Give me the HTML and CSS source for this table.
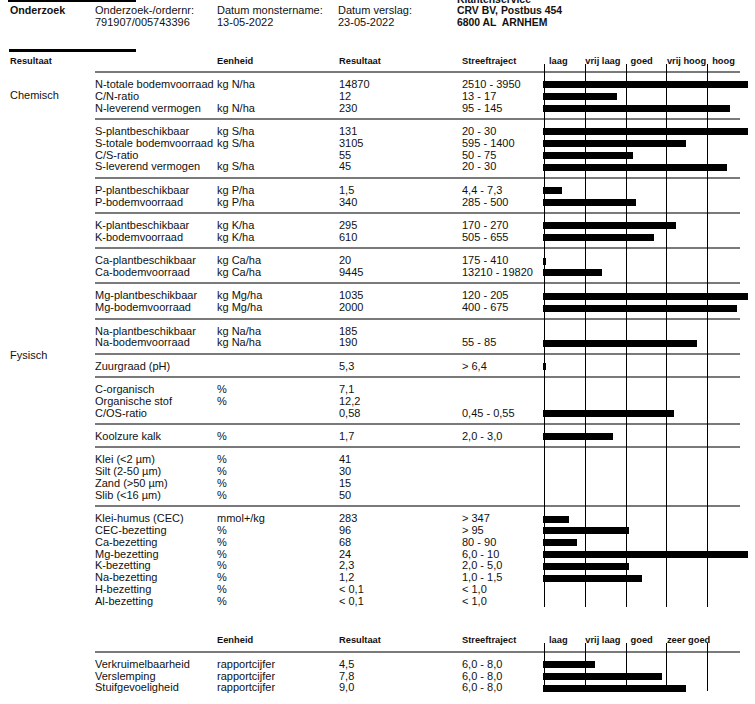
FILE: index.html
```html
<!DOCTYPE html>
<html lang="nl">
<head>
<meta charset="utf-8">
<title>Onderzoek resultaat</title>
<link rel="stylesheet" href="styles.css">
</head>
<body>
<div class="top-rule"></div>
<div class="meta">
  <div class="meta-title">Onderzoek</div>
  <div>Onderzoek-/ordernr:<br>791907/005743396</div>
  <div>Datum monstername:<br>13-05-2022</div>
  <div>Datum verslag:<br>23-05-2022</div>
  <div class="addr">Klantenservice<br>CRV BV, Postbus 454<br>6800 AL&nbsp; ARNHEM</div>
</div>
<div class="section-rule"></div>

<div class="report">
  <div class="labels">
    <div class="lbl-head">Resultaat</div>
    <div class="lbl chem">Chemisch</div>
    <div class="lbl fys">Fysisch</div>
  </div>
  <div class="table">
    <div class="thead">
      <span></span><span>Eenheid</span><span>Resultaat</span><span>Streeftraject</span>
      <div class="scale"><span>laag</span><span class="tight">vrij laag</span><span>goed</span><span class="tight">vrij hoog</span><span>hoog</span></div>
    </div>

    <div class="group">
      <span>N-totale bodemvoorraad</span><span>kg N/ha</span><span>14870</span><span>2510 - 3950</span><span class="bc"><i class="bar" style="width:205px"></i></span>
      <span>C/N-ratio</span><span></span><span>12</span><span>13 - 17</span><span class="bc"><i class="bar" style="width:74px"></i></span>
      <span>N-leverend vermogen</span><span>kg N/ha</span><span>230</span><span>95 - 145</span><span class="bc"><i class="bar" style="width:187px"></i></span>
    </div>

    <div class="group">
      <span>S-plantbeschikbaar</span><span>kg S/ha</span><span>131</span><span>20 - 30</span><span class="bc"><i class="bar" style="width:205px"></i></span>
      <span>S-totale bodemvoorraad</span><span>kg S/ha</span><span>3105</span><span>595 - 1400</span><span class="bc"><i class="bar" style="width:143px"></i></span>
      <span>C/S-ratio</span><span></span><span>55</span><span>50 - 75</span><span class="bc"><i class="bar" style="width:90px"></i></span>
      <span>S-leverend vermogen</span><span>kg S/ha</span><span>45</span><span>20 - 30</span><span class="bc"><i class="bar" style="width:184px"></i></span>
    </div>

    <div class="group">
      <span>P-plantbeschikbaar</span><span>kg P/ha</span><span>1,5</span><span>4,4 - 7,3</span><span class="bc"><i class="bar" style="width:19px"></i></span>
      <span>P-bodemvoorraad</span><span>kg P/ha</span><span>340</span><span>285 - 500</span><span class="bc"><i class="bar" style="width:93px"></i></span>
    </div>

    <div class="group">
      <span>K-plantbeschikbaar</span><span>kg K/ha</span><span>295</span><span>170 - 270</span><span class="bc"><i class="bar" style="width:133px"></i></span>
      <span>K-bodemvoorraad</span><span>kg K/ha</span><span>610</span><span>505 - 655</span><span class="bc"><i class="bar" style="width:111px"></i></span>
    </div>

    <div class="group">
      <span>Ca-plantbeschikbaar</span><span>kg Ca/ha</span><span>20</span><span>175 - 410</span><span class="bc"><i class="bar" style="width:3px"></i></span>
      <span>Ca-bodemvoorraad</span><span>kg Ca/ha</span><span>9445</span><span>13210 - 19820</span><span class="bc"><i class="bar" style="width:59px"></i></span>
    </div>

    <div class="group">
      <span>Mg-plantbeschikbaar</span><span>kg Mg/ha</span><span>1035</span><span>120 - 205</span><span class="bc"><i class="bar" style="width:205px"></i></span>
      <span>Mg-bodemvoorraad</span><span>kg Mg/ha</span><span>2000</span><span>400 - 675</span><span class="bc"><i class="bar" style="width:194px"></i></span>
    </div>

    <div class="group">
      <span>Na-plantbeschikbaar</span><span>kg Na/ha</span><span>185</span><span></span><span class="bc"></span>
      <span>Na-bodemvoorraad</span><span>kg Na/ha</span><span>190</span><span>55 - 85</span><span class="bc"><i class="bar" style="width:154px"></i></span>
    </div>

    <div class="group">
      <span>Zuurgraad (pH)</span><span></span><span>5,3</span><span>&gt; 6,4</span><span class="bc"><i class="bar" style="width:3px"></i></span>
    </div>

    <div class="group">
      <span>C-organisch</span><span>%</span><span>7,1</span><span></span><span class="bc"></span>
      <span>Organische stof</span><span>%</span><span>12,2</span><span></span><span class="bc"></span>
      <span>C/OS-ratio</span><span></span><span>0,58</span><span>0,45 - 0,55</span><span class="bc"><i class="bar" style="width:131px"></i></span>
    </div>

    <div class="group">
      <span>Koolzure kalk</span><span>%</span><span>1,7</span><span>2,0 - 3,0</span><span class="bc"><i class="bar" style="width:70px"></i></span>
    </div>

    <div class="group">
      <span>Klei (&lt;2 µm)</span><span>%</span><span>41</span><span></span><span class="bc"></span>
      <span>Silt (2-50 µm)</span><span>%</span><span>30</span><span></span><span class="bc"></span>
      <span>Zand (&gt;50 µm)</span><span>%</span><span>15</span><span></span><span class="bc"></span>
      <span>Slib (&lt;16 µm)</span><span>%</span><span>50</span><span></span><span class="bc"></span>
    </div>

    <div class="group">
      <span>Klei-humus (CEC)</span><span>mmol+/kg</span><span>283</span><span>&gt; 347</span><span class="bc"><i class="bar" style="width:26px"></i></span>
      <span>CEC-bezetting</span><span>%</span><span>96</span><span>&gt; 95</span><span class="bc"><i class="bar" style="width:86px"></i></span>
      <span>Ca-bezetting</span><span>%</span><span>68</span><span>80 - 90</span><span class="bc"><i class="bar" style="width:34px"></i></span>
      <span>Mg-bezetting</span><span>%</span><span>24</span><span>6,0 - 10</span><span class="bc"><i class="bar" style="width:205px"></i></span>
      <span>K-bezetting</span><span>%</span><span>2,3</span><span>2,0 - 5,0</span><span class="bc"><i class="bar" style="width:86px"></i></span>
      <span>Na-bezetting</span><span>%</span><span>1,2</span><span>1,0 - 1,5</span><span class="bc"><i class="bar" style="width:99px"></i></span>
      <span>H-bezetting</span><span>%</span><span>&lt; 0,1</span><span>&lt; 1,0</span><span class="bc"></span>
      <span>Al-bezetting</span><span>%</span><span>&lt; 0,1</span><span>&lt; 1,0</span><span class="bc"></span>
    </div>

    <div class="gridlines main-lines"></div>
  </div>
</div>

<div class="report second">
  <div class="labels"></div>
  <div class="table">
    <div class="thead">
      <span></span><span>Eenheid</span><span>Resultaat</span><span>Streeftraject</span>
      <div class="scale"><span>laag</span><span class="tight">vrij laag</span><span>goed</span><span class="tight">zeer goed</span><span></span></div>
    </div>
    <div class="group">
      <span>Verkruimelbaarheid</span><span>rapportcijfer</span><span>4,5</span><span>6,0 - 8,0</span><span class="bc"><i class="bar" style="width:52px"></i></span>
      <span>Verslemping</span><span>rapportcijfer</span><span>7,8</span><span>6,0 - 8,0</span><span class="bc"><i class="bar" style="width:119px"></i></span>
      <span>Stuifgevoeligheid</span><span>rapportcijfer</span><span>9,0</span><span>6,0 - 8,0</span><span class="bc"><i class="bar" style="width:143px"></i></span>
    </div>
    <div class="gridlines sub-lines"></div>
  </div>
</div>
</body>
</html>
```
FILE: styles.css
```css
html, body {
  margin: 0;
  padding: 0;
  background: #fff;
}

body {
  font-family: "Liberation Sans", Arial, sans-serif;
  font-size: 11px;
  color: #111;
  width: 755px;
  overflow: hidden;
}

.top-rule {
  margin-left: 8px;
  width: 128px;
  height: 2px;
  background: #000;
}

.meta {
  display: grid;
  grid-template-columns: 85px 122px 121px 119px auto;
  padding-left: 10px;
  margin-top: 3.3px;
  line-height: 11.7px;
  align-items: start;
}

.meta-title {
  font-weight: bold;
  font-size: 10.7px;
}

.addr {
  margin-top: -11.7px;
  font-weight: bold;
  font-size: 10.4px;
}

.section-rule {
  margin-top: 20.3px;
  margin-left: 9px;
  width: 127px;
  height: 3px;
  background: #000;
}

.report {
  display: grid;
  grid-template-columns: 85px 653px;
  padding-left: 10px;
  margin-top: 3.5px;
}

.report.second {
  margin-top: 24px;
}

.lbl-head {
  font-weight: bold;
  font-size: 9.3px;
  line-height: 11px;
}

.lbl {
  line-height: 11.8px;
}

.chem {
  margin-top: 23.3px;
}

.fys {
  margin-top: 248.5px;
}

.table {
  position: relative;
}

.thead {
  display: grid;
  grid-template-columns: 122px 122px 123px 82px 204px;
  font-weight: bold;
  font-size: 9.3px;
  line-height: 11px;
  padding-bottom: 4.5px;
  white-space: nowrap;
}

.scale {
  display: grid;
  grid-template-columns: repeat(5, 40.8px);
}

.scale span {
  padding-left: 5px;
}

.scale span.tight {
  padding-left: 0.5px;
}

.group {
  display: grid;
  grid-template-columns: 122px 122px 123px 82px 196px;
  margin-right: 8px;
  border-top: 2px solid #7a7a7a;
  padding: 6px 0 3.6px;
  line-height: 11.8px;
  white-space: nowrap;
}

.bc {
  display: flex;
  align-items: center;
  margin-left: -1px;
  height: 11.8px;
}

.bar {
  display: block;
  flex: none;
  height: 7px;
  background: #000;
}

.gridlines {
  position: absolute;
  left: 449px;
  width: 164.2px;
  background: repeating-linear-gradient(to right, #000 0, #000 1px, transparent 1px, transparent 40.8px);
  pointer-events: none;
}

.main-lines {
  top: 8px;
  bottom: 4px;
}

.sub-lines {
  top: 7.5px;
  height: 48px;
}
```
